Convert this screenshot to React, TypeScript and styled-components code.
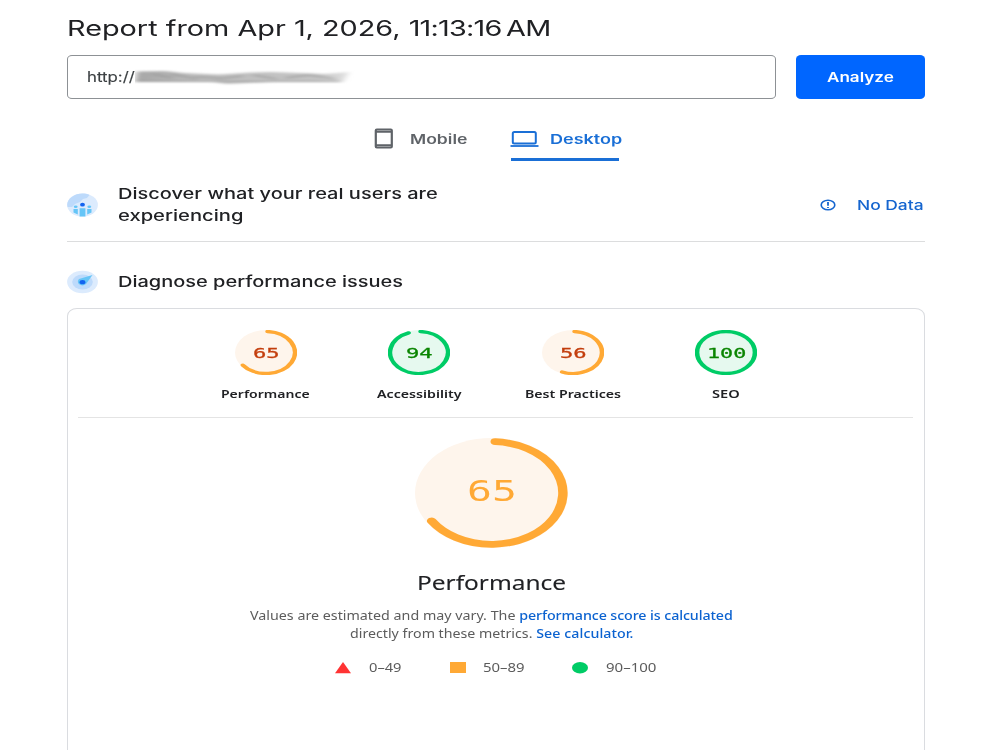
import React, { useLayoutEffect, useRef, useState } from "react";
import styled, { createGlobalStyle } from "styled-components";

const GlobalStyle = createGlobalStyle`
  * { box-sizing: border-box; }
  html, body { margin: 0; background: #fff; }
  body { width: 1000px; height: 750px; overflow: hidden; }
`;

const sans = `Inter, "Liberation Sans", sans-serif`;
const noto = `"Noto Sans", "Open Sans", sans-serif`;
const mono = `"DejaVu Sans Mono", "Liberation Mono", monospace`;

/* Wide text: the line is stretched horizontally to fill its box. */
interface TextStyle {
  $size: number;
  $line: number;
  $weight?: number;
  $color?: string;
  $font?: string;
  $thicken?: number;
}
const TextBox = styled.span<TextStyle & { $width: number }>`
  display: block;
  flex: none;
  width: ${(p) => p.$width}px;
  height: ${(p) => p.$line}px;
  font-family: ${(p) => p.$font ?? sans};
  font-size: ${(p) => p.$size}px;
  line-height: ${(p) => p.$line}px;
  font-weight: ${(p) => p.$weight ?? 400};
  color: ${(p) => p.$color ?? "#202124"};
  -webkit-text-stroke: ${(p) => p.$thicken ?? 0}px currentColor;
  white-space: nowrap;
`;
const Stretched = styled.span`
  display: inline-block;
  vertical-align: top;
  transform-origin: 0 50%;
`;

function WideText({
  width, size, line, weight, color, font, thicken, children,
}: {
  width: number; size: number; line: number; weight?: number;
  color?: string; font?: string; thicken?: number; children: React.ReactNode;
}) {
  const ref = useRef<HTMLSpanElement>(null);
  const [scale, setScale] = useState(1.3);
  useLayoutEffect(() => {
    if (ref.current) setScale(width / ref.current.offsetWidth);
  }, [width]);
  return (
    <TextBox $width={width} $size={size} $line={line} $weight={weight} $color={color} $font={font} $thicken={thicken}>
      <Stretched ref={ref} style={{ transform: `scaleX(${scale})` }}>{children}</Stretched>
    </TextBox>
  );
}

const Page = styled.main`
  width: 858px;
  height: 750px;
  margin-left: 66.5px;
  display: flex;
  flex-direction: column;
  overflow: hidden;
  > * { flex-shrink: 0; }
`;
const Title = styled.h1`
  margin: 0;
  padding-top: 13px;
  height: 55px;
`;
const Time = styled.span`
  letter-spacing: -0.6px;
  word-spacing: -2px;
`;
const SearchRow = styled.form`
  display: flex;
  gap: 20px;
  height: 45px;
`;
const UrlField = styled.div`
  flex: 1;
  height: 44px;
  display: flex;
  align-items: center;
  padding-left: 19px;
  border: 1px solid #8d9195;
  border-radius: 5px / 4px;
`;
const AnalyzeButton = styled.button`
  width: 128.5px;
  height: 44px;
  padding: 0;
  border: 0;
  border-radius: 5px / 4px;
  background: #0066ff;
  display: flex;
  align-items: center;
  justify-content: center;
  text-align: left;
`;
const Tabs = styled.nav`
  display: flex;
  justify-content: center;
  gap: 42px;
  height: 61px;
  padding: 24px 0 0 4px;
`;
const Tab = styled.div<{ $active?: boolean }>`
  height: 37px;
  display: flex;
  align-items: center;
  gap: ${(p) => (p.$active ? 11 : 16)}px;
  padding-bottom: 8px;
  background: ${(p) =>
    p.$active ? "linear-gradient(#1a6fd6, #1a6fd6) 1px 100% / 108px 3px no-repeat" : "none"};
`;
const Section = styled.section<{ $height: number; $top: number; $ruled?: boolean }>`
  display: flex;
  align-items: center;
  height: ${(p) => p.$height}px;
  padding-top: ${(p) => p.$top}px;
  border-bottom: ${(p) => (p.$ruled ? "1px solid #dcddde" : "0")};
`;
const SectionTitle = styled.div`
  flex: 1;
  margin-left: 20px;
`;
const NoData = styled.div`
  display: flex;
  align-items: center;
  gap: 21px;
  padding-right: 1px;
`;
const Card = styled.section`
  height: 470px;
  border: 1px solid #dadce0;
  border-radius: 10px / 8px;
  padding: 0 10.5px;
`;
const Scores = styled.div`
  display: flex;
  justify-content: center;
  height: 109px;
  padding: 21px 0 0 1px;
  border-bottom: 1px solid #e4e4e4;
`;
const Score = styled.div`
  width: 153.4px;
  display: flex;
  flex-direction: column;
  align-items: center;
  gap: 10px;
`;
const GaugeBox = styled.div<{ $w: number; $h: number; $lift: number }>`
  display: grid;
  place-items: center;
  width: ${(p) => p.$w}px;
  height: ${(p) => p.$h}px;
  > * { grid-area: 1 / 1; }
  > svg { display: block; width: 100%; height: 100%; }
  > span { margin-bottom: ${(p) => p.$lift}px; }
`;
const Detail = styled.div`
  display: flex;
  flex-direction: column;
  align-items: center;
  padding-top: 20px;
  margin-left: -8px;
`;
const Heading = styled.h2`
  margin: 21px 0 10px;
`;
const Link = styled.a<{ $tracking: number }>`
  color: #0b62d0;
  font-weight: 500;
  letter-spacing: ${(p) => p.$tracking}px;
`;
const Legend = styled.div`
  display: flex;
  align-items: center;
  justify-content: center;
  gap: 48px;
  margin-top: 16px;
  padding-left: 8px;
`;
const LegendItem = styled.div`
  display: flex;
  align-items: center;
  gap: 17.5px;
`;

const rad = (deg: number) => (deg * Math.PI) / 180;
const at = (deg: number) => `${60 + 56 * Math.sin(rad(deg))} ${60 - 56 * Math.cos(rad(deg))}`;

function Gauge({ w, h, end, color, fill, stroke = 8.8, lift = 0, children }: {
  w: number; h: number; end: number; color: string; fill: string;
  stroke?: number; lift?: number; children: React.ReactNode;
}) {
  return (
    <GaugeBox $w={w} $h={h} $lift={lift}>
      <svg viewBox="0 0 120 120" preserveAspectRatio="none">
        <circle cx="60" cy="60" r="60" fill={fill} />
        {end >= 360 ? (
          <circle cx="60" cy="60" r="56" fill="none" stroke={color} strokeWidth={stroke} />
        ) : (
          <path
            d={`M ${at(3)} A 56 56 0 ${end > 183 ? 1 : 0} 1 ${at(end)}`}
            fill="none" stroke={color} strokeWidth={stroke} strokeLinecap="round"
          />
        )}
      </svg>
      {children}
    </GaugeBox>
  );
}

const ORANGE = "#ffa935";
const GREEN = "#0c6";
const scores = [
  { label: "Performance", value: "65", end: 233, good: false, labelWidth: 89, valueWidth: 26 },
  { label: "Accessibility", value: "94", end: 339, good: true, labelWidth: 85, valueWidth: 26 },
  { label: "Best Practices", value: "56", end: 202, good: false, labelWidth: 96, valueWidth: 26 },
  { label: "SEO", value: "100", end: 360, good: true, labelWidth: 28, valueWidth: 39 },
];

const RedactedHost = () => (
  <svg width="222" height="20" viewBox="0 0 222 20">
    <defs>
      <filter id="soft" x="-5%" y="-40%" width="110%" height="180%">
        <feGaussianBlur stdDeviation="3 0.9" />
      </filter>
      <linearGradient id="fade">
        <stop offset="0" stopColor="#a6a6a6" />
        <stop offset=".3" stopColor="#bebebe" />
        <stop offset=".85" stopColor="#c4c4c4" />
        <stop offset="1" stopColor="#e2e2e2" />
      </linearGradient>
    </defs>
    <g filter="url(#soft)">
      <path d="M2 4.500L30 4L48 6L84 7.500L116 5.500L136 5L165 6L190 7L214 5L208 14.500L150 14.500L138 15L92 17L78 15L0 15Z" fill="url(#fade)" />
      <path d="M18 7L38 11M36 7L62 12M82 12L108 9M118 8L142 12M150 11L174 8M174 8L200 12M60 10L84 11" stroke="#8c8c8c" strokeWidth="1.3" opacity=".6" />
      <path d="M0 14.500H206" stroke="#999" strokeWidth="1.200" />
    </g>
  </svg>
);

const MobileIcon = () => (
  <svg width="20" height="21" viewBox="0 0 20 21">
    <rect x="1.800" y="1.500" width="16" height="18" rx="1" fill="none" stroke="#5f6368" strokeWidth="2.200" />
    <path d="M2 3.800H18M2 17.200H18" stroke="#5f6368" strokeWidth="2" />
  </svg>
);
const DesktopIcon = () => (
  <svg width="29" height="18" viewBox="0 0 29 18">
    <rect x="2.800" y="2" width="23" height="11.500" rx="1.500" fill="none" stroke="#1a6fd6" strokeWidth="2" />
    <path d="M0.500 16H28.500" stroke="#1a6fd6" strokeWidth="1.800" />
  </svg>
);
const UsersIcon = () => (
  <svg width="31" height="24" viewBox="0 0 31 24">
    <ellipse cx="15.500" cy="12" rx="15.400" ry="11.500" fill="#dcebfd" />
    <path d="M0.200 12C0.500 5 8 0.500 15.500 0.500C18 0.500 20.500 1 22.500 1.900L20 5L16 6L13 9L8 11L5 14L0.600 14Z" fill="#bddafb" />
    <path d="M6.500 16H10.800V21.500L6.500 19.500ZM12.600 15.300H18.400V23.400H12.600ZM20.200 16H24.500V19.500L20.200 21.500Z" fill="#65c5f7" />
    <ellipse cx="8.700" cy="13.700" rx="1.900" ry="1.200" fill="#65c5f7" />
    <ellipse cx="22.300" cy="13.700" rx="1.900" ry="1.200" fill="#65c5f7" />
    <ellipse cx="15.500" cy="11.700" rx="2.400" ry="1.900" fill="#1263f0" />
  </svg>
);
const DiagnoseIcon = () => (
  <svg width="31" height="24" viewBox="0 0 31 24">
    <ellipse cx="15.500" cy="12" rx="15.400" ry="11.200" fill="#dcebfd" />
    <ellipse cx="15.500" cy="12" rx="10.300" ry="7.500" fill="#bddafb" />
    <path d="M12 9L25.500 5L19 14Q15.500 16.800 11.800 14Q9.800 11.500 12 9Z" fill="#65c5f7" />
    <ellipse cx="15.500" cy="12.200" rx="2.900" ry="2.100" fill="#1263f0" />
  </svg>
);
const NoticeIcon = () => (
  <svg width="16" height="12" viewBox="0 0 16 12">
    <ellipse cx="8" cy="6" rx="6.800" ry="4.800" fill="none" stroke="#1565cf" strokeWidth="1.600" />
    <path d="M8 3V6.700M8 7.900V9.100" stroke="#1565cf" strokeWidth="1.800" />
  </svg>
);

export default function App() {
  return (
    <>
      <GlobalStyle />
      <Page>
        <Title>
          <WideText width={484} size={21.5} line={30}>Report from Apr 1, 2026, <Time>11:13:16 AM</Time></WideText>
        </Title>
        <SearchRow>
          <UrlField>
            <WideText width={48} size={14} line={20} thicken={0.15} color="#3c4043">http://</WideText>
            <RedactedHost />
          </UrlField>
          <AnalyzeButton type="button">
            <WideText width={67} size={13} line={20} weight={600} color="#fff">Analyze</WideText>
          </AnalyzeButton>
        </SearchRow>
        <Tabs>
          <Tab>
            <MobileIcon />
            <WideText width={58} size={13} line={20} weight={600} color="#5f6368">Mobile</WideText>
          </Tab>
          <Tab $active>
            <DesktopIcon />
            <WideText width={72} size={13} line={20} weight={600} color="#1a6fd6">Desktop</WideText>
          </Tab>
        </Tabs>
        <Section $height={81} $top={8} $ruled>
          <UsersIcon />
          <SectionTitle>
            <WideText width={320} size={15} line={22} weight={500}>Discover what your real users are</WideText>
            <WideText width={125} size={15} line={22} weight={500}>experiencing</WideText>
          </SectionTitle>
          <NoData>
            <NoticeIcon />
            <WideText width={67} size={13.5} line={20} weight={500} color="#1565cf">No Data</WideText>
          </NoData>
        </Section>
        <Section $height={66} $top={14}>
          <DiagnoseIcon />
          <SectionTitle>
            <WideText width={285} size={15} line={22} weight={500}>Diagnose performance issues</WideText>
          </SectionTitle>
        </Section>
        <Card>
          <Scores>
            {scores.map((s) => (
              <Score key={s.label}>
                <Gauge w={62} h={45} end={s.end} color={s.good ? GREEN : ORANGE} fill={s.good ? "#e6f9ef" : "#fef5ec"}>
                  <WideText width={s.valueWidth} size={14.5} line={18} thicken={0.3} font={mono} color={s.good ? "#0a8500" : "#c33d0c"}>
                    {s.value}
                  </WideText>
                </Gauge>
                <WideText width={s.labelWidth} size={11.5} line={18} weight={600} font={noto}>{s.label}</WideText>
              </Score>
            ))}
          </Scores>
          <Detail>
            <Gauge w={153} h={110} end={237} stroke={7.4} lift={5} color={ORANGE} fill="#fef5ec">
              <WideText width={50} size={29} line={36} font={mono} color={ORANGE}>65</WideText>
            </Gauge>
            <Heading>
              <WideText width={149} size={20} line={28} font={noto} thicken={0.1}>Performance</WideText>
            </Heading>
            <WideText width={483} size={12} line={18} font={noto} color="#5c5c5c">
              Values are estimated and may vary. The <Link $tracking={-0.09}>performance score is calculated</Link>
            </WideText>
            <WideText width={283} size={12} line={18} font={noto} color="#5c5c5c">
              directly from these metrics. <Link $tracking={0.06}>See calculator.</Link>
            </WideText>
            <Legend>
              <LegendItem>
                <svg width="16" height="12"><path d="M8 0L16 11.300H0Z" fill="#f33" /></svg>
                <WideText width={33} size={12} line={18} font={noto} color="#5c5c5c">0–49</WideText>
              </LegendItem>
              <LegendItem>
                <svg width="16" height="12"><rect width="16" height="11" fill="#ffa935" /></svg>
                <WideText width={41} size={12} line={18} font={noto} color="#5c5c5c">50–89</WideText>
              </LegendItem>
              <LegendItem>
                <svg width="16" height="12"><ellipse cx="8" cy="5.700" rx="8" ry="5.700" fill="#0c6" /></svg>
                <WideText width={50} size={12} line={18} font={noto} color="#5c5c5c">90–100</WideText>
              </LegendItem>
            </Legend>
          </Detail>
        </Card>
      </Page>
    </>
  );
}
